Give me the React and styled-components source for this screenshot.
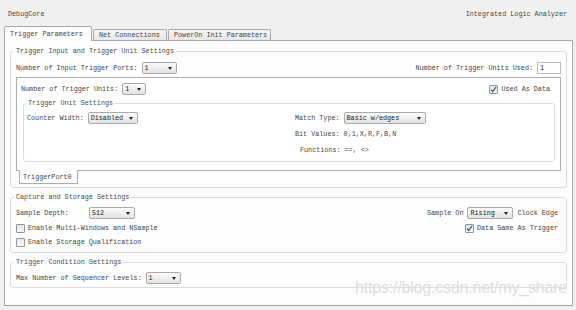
import React from 'react';
import styled, { createGlobalStyle } from 'styled-components';

const GlobalStyle = createGlobalStyle`
  html, body { margin: 0; padding: 0; background: #f0f0f0; }
  body { font-family: "Liberation Mono", "Courier New", monospace; }
`;

const Page = styled.div`
  position: relative;
  width: 576px;
  height: 310px;
  overflow: hidden;
  background: #f0f0f0;
  font-family: "Liberation Mono", "Courier New", monospace;
  font-size: 6.75px;
  line-height: 10px;
  color: #444;
`;

const Header = styled.div`
  height: 26px;
  box-sizing: border-box;
  padding: 1px 9px 0 8px;
  display: flex;
  align-items: center;
  justify-content: space-between;
  color: #444;
`;

const TabBar = styled.div`
  height: 14px;
  box-sizing: border-box;
  padding-left: 4px;
  display: flex;
  align-items: flex-end;
  gap: 1px;
`;

const Tab = styled.div`
  position: relative;
  z-index: 1;
  width: ${(p) => p.$w}px;
  height: ${(p) => (p.$active ? 15 : 11)}px;
  margin-bottom: ${(p) => (p.$active ? -1 : 0)}px;
  box-sizing: border-box;
  border: 1px solid #a8a8a8;
  border-bottom: none;
  border-radius: 2px 2px 0 0;
  background: ${(p) => (p.$active ? '#fdfdfd' : 'linear-gradient(#f6f6f6, #e6e6e6)')};
  padding-left: 5px;
  display: flex;
  align-items: center;
  white-space: nowrap;
  color: #444;
`;

const Panel = styled.div`
  margin-left: 4px;
  width: 569px;
  height: 266px;
  box-sizing: border-box;
  border: 1px solid #a8a8a8;
  background: #fdfdfd;
  padding: 5px 5px 0;
  display: flex;
  flex-direction: column;
  gap: 4px;
`;

const Group = styled.fieldset`
  margin: 0;
  min-width: 0;
  box-sizing: border-box;
  border: 1px solid #dcdcdc;
  border-radius: 3px;
  padding: ${(p) => p.$pad || '5px 5px 3px 5px'};
`;

const Legend = styled.legend`
  padding: 0 2px;
  margin-left: ${(p) => (p.$ml !== undefined ? p.$ml : -2)}px;
  line-height: 10px;
  color: #4a4a4a;
`;

const Row = styled.div`
  height: ${(p) => p.$h || 12}px;
  margin-top: ${(p) => p.$mt || 0}px;
  padding-right: ${(p) => p.$pr || 0}px;
  display: flex;
  align-items: center;
  justify-content: ${(p) => p.$justify || 'space-between'};
`;

const Field = styled.div`
  display: flex;
  align-items: center;
  gap: 4px;
  white-space: nowrap;
`;

const Label = styled.span`
  display: inline-block;
  width: ${(p) => (p.$w ? `${p.$w}px` : 'auto')};
  white-space: nowrap;
`;

const Select = styled.div`
  width: ${(p) => p.$w}px;
  height: 12px;
  box-sizing: border-box;
  border: 1px solid #a9a9a9;
  border-radius: 2px;
  background: linear-gradient(#fbfbfb, #e2e2e2);
  padding: 0 4px 0 2px;
  display: flex;
  align-items: center;
  justify-content: space-between;
  color: #222;
`;

const Arrow = styled.span`
  width: 0;
  height: 0;
  border-left: 2.5px solid transparent;
  border-right: 2.5px solid transparent;
  border-top: 3px solid #222;
`;

const TextBox = styled.div`
  width: 24px;
  height: 12px;
  box-sizing: border-box;
  border: 1px solid #bcbcbc;
  background: #fff;
  padding-left: 2px;
  display: flex;
  align-items: center;
  color: #222;
`;

const Box = styled.span`
  width: 9px;
  height: 9px;
  box-sizing: border-box;
  border: 1px solid #939393;
  border-radius: 1px;
  background: ${(p) => (p.$checked ? 'linear-gradient(#dfe6f2, #f6f8fc)' : 'linear-gradient(#e6e6e6, #fafafa)')};
  display: inline-flex;
  align-items: center;
  justify-content: center;
`;

const CheckField = styled.div`
  display: flex;
  align-items: center;
  gap: 3px;
  white-space: nowrap;
`;

const InnerTabs = styled.div`
  display: flex;
  flex-direction: column;
`;

const InnerPanel = styled.div`
  border: 1px solid #adadad;
  background: #fff;
  padding: 5px 5px 8px 4px;
  display: flex;
  flex-direction: column;
  gap: 3px;
`;

const BottomTabs = styled.div`
  display: flex;
  padding-left: 3px;
`;

const BottomTab = styled.div`
  position: relative;
  width: 59px;
  height: 14px;
  margin-top: -1px;
  box-sizing: border-box;
  border: 1px solid #adadad;
  border-top: none;
  background: #fff;
  padding-left: 3px;
  display: flex;
  align-items: center;
`;

const UnitGrid = styled.div`
  display: grid;
  grid-template-columns: 268px 1fr;
  align-items: start;
`;

const Column = styled.div`
  display: flex;
  flex-direction: column;
  align-items: ${(p) => p.$align || 'stretch'};
`;

const Line = styled.div`
  margin-top: ${(p) => p.$mt || 0}px;
  padding-left: ${(p) => p.$indent || 0}px;
  white-space: nowrap;
`;

const Split = styled.div`
  display: flex;
  justify-content: space-between;
`;

const Watermark = styled.div`
  position: absolute;
  right: 9px;
  top: 278px;
  font-family: "Liberation Sans", Arial, sans-serif;
  font-size: 16px;
  line-height: 20px;
  color: rgba(205, 205, 205, 0.7);
  text-shadow: 0 0 1px rgba(255, 255, 255, 0.8);
  letter-spacing: -0.2px;
  pointer-events: none;
`;

function Combo({ w, value }) {
  return (
    <Select $w={w}>
      <span>{value}</span>
      <Arrow />
    </Select>
  );
}

function Check({ checked, children }) {
  return (
    <CheckField>
      <Box $checked={checked}>
        {checked && (
          <svg width="7" height="7" viewBox="0 0 7 7">
            <path d="M1 3.6 L2.7 5.5 L6 1" fill="none" stroke="#3b4f7a" strokeWidth="1.2" />
          </svg>
        )}
      </Box>
      <span>{children}</span>
    </CheckField>
  );
}

export default function App() {
  return (
    <>
      <GlobalStyle />
      <Page>
        <Header>
          <span>DebugCore</span>
          <span>Integrated Logic Analyzer</span>
        </Header>
        <TabBar>
          <Tab $active $w={88}>Trigger Parameters</Tab>
          <Tab $w={74}>Net Connections</Tab>
          <Tab $w={103}>PowerOn Init Parameters</Tab>
        </TabBar>
        <Panel>
          <Group $pad="6px 5px 3px 5px">
            <Legend>Trigger Input and Trigger Unit Settings</Legend>
            <Row>
              <Field>
                <Label>Number of Input Trigger Ports:</Label>
                <Combo w={35} value="1" />
              </Field>
              <Field>
                <Label>Number of Trigger Units Used:</Label>
                <TextBox>1</TextBox>
              </Field>
            </Row>
            <Row $h={3} />
            <InnerTabs>
              <InnerPanel>
                <Row $pr={5}>
                  <Field>
                    <Label>Number of Trigger Units:</Label>
                    <Combo w={24} value="1" />
                  </Field>
                  <Check checked>Used As Data</Check>
                </Row>
                <Group $pad="4px 5px 6px 3px" style={{ marginLeft: 2 }}>
                  <Legend $ml={-1}>Trigger Unit Settings</Legend>
                  <UnitGrid>
                    <Field>
                      <Label>Counter Width:</Label>
                      <Combo w={50} value="Disabled" />
                    </Field>
                    <Column>
                      <Field>
                        <Label>Match Type:</Label>
                        <Combo w={82} value="Basic w/edges" />
                      </Field>
                      <Line $mt={5}>Bit Values: 0,1,X,R,F,B,N</Line>
                      <Line $mt={6} $indent={5}>Functions: ==, &lt;&gt;</Line>
                    </Column>
                  </UnitGrid>
                </Group>
              </InnerPanel>
              <BottomTabs>
                <BottomTab>TriggerPort0</BottomTab>
              </BottomTabs>
            </InnerTabs>
          </Group>

          <Group $pad="5px 8px 3px 5px">
            <Legend>Capture and Storage Settings</Legend>
            <Split>
              <Column>
                <Row>
                  <Field>
                    <Label $w={69}>Sample Depth:</Label>
                    <Combo w={46} value="512" />
                  </Field>
                </Row>
                <Row $h={14} $mt={2}>
                  <Check>Enable Multi-Windows and NSample</Check>
                </Row>
                <Row $h={14}>
                  <Check>Enable Storage Qualification</Check>
                </Row>
              </Column>
              <Column $align="flex-end">
                <Row>
                  <Field>
                    <Label>Sample On</Label>
                    <Combo w={46} value="Rising" />
                    <Label>Clock Edge</Label>
                  </Field>
                </Row>
                <Row $h={14} $mt={2}>
                  <Check checked>Data Same As Trigger</Check>
                </Row>
              </Column>
            </Split>
          </Group>

          <Group $pad="5px 5px 3px 5px">
            <Legend>Trigger Condition Settings</Legend>
            <Row $justify="flex-start">
              <Field>
                <Label>Max Number of Sequencer Levels:</Label>
                <Combo w={35} value="1" />
              </Field>
            </Row>
          </Group>
        </Panel>
        <Watermark>https://blog.csdn.net/my_share</Watermark>
      </Page>
    </>
  );
}
